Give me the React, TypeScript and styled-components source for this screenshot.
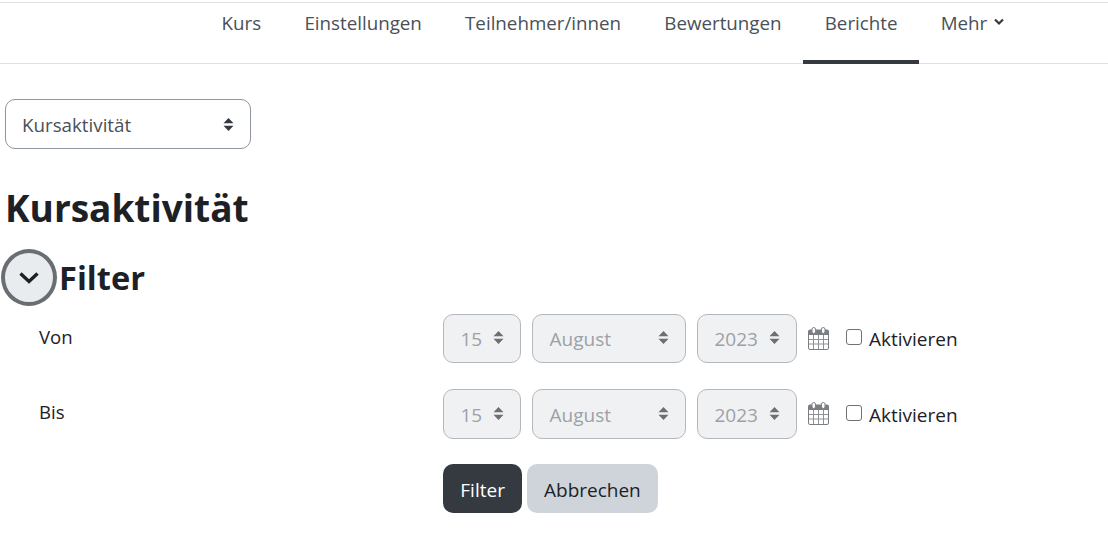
import React from "react";
import styled, { createGlobalStyle } from "styled-components";

const Global = createGlobalStyle`
  html, body { margin: 0; padding: 0; background: #fff; }
  body { font-family: "Open Sans", "Noto Sans", "Liberation Sans", sans-serif; color: #1d2125; }
`;
const Page = styled.div`
  width: 1108px;
  height: 535px;
  overflow: hidden;
  padding-top: 2px;
  box-sizing: border-box;
`;
const Nav = styled.nav`
  height: 62px;
  box-sizing: border-box;
  border-top: 1px solid #dee2e6;
  border-bottom: 1px solid #dee2e6;
  display: flex;
  padding-left: 200px;
`;
const Tab = styled.div<{ $active?: boolean }>`
  height: 61px;
  box-sizing: border-box;
  padding: 7px 21.6px 0;
  margin-bottom: -1px;
  font-size: 18.75px;
  line-height: 26px;
  color: #495057;
  white-space: nowrap;
  display: flex;
  align-items: flex-start;
  gap: 7px;
  border-bottom: 4px solid ${(p) => (p.$active ? "#343a40" : "transparent")};
`;
const Content = styled.main`
  padding: 35px 0 0 5px;
`;
const Sort = ({ color = "#495057", w = 11 }: { color?: string; w?: number }) => (
  <svg width={w} height="15" viewBox="0 0 11 15" aria-hidden="true">
    <path d="M5.5 1 L10.5 6.2 H0.5 Z M5.5 14 L10.5 8.8 H0.5 Z" fill={color} />
  </svg>
);
const JumpSelect = styled.div`
  width: 246px;
  height: 50px;
  box-sizing: border-box;
  border: 1px solid #8f959e;
  border-radius: 10px;
  padding: 0 16px;
  display: flex;
  align-items: center;
  justify-content: space-between;
  font-size: 18.75px;
  color: #495057;
`;
const Title = styled.h1`
  margin: 36px 0 0;
  font-size: 37px;
  line-height: 46px;
  font-weight: 700;
  color: #1d2125;
`;
const FilterHead = styled.div`
  display: flex;
  align-items: center;
  margin: 18px 0 0 -4px;
  gap: 2px;
`;
const Toggle = styled.button`
  width: 56px;
  height: 57px;
  padding: 0;
  box-sizing: border-box;
  border-radius: 50%;
  border: 4.5px solid #6a6e72;
  background: #e9ecef;
  display: flex;
  align-items: center;
  justify-content: center;
`;
const Subtitle = styled.h2`
  margin: 0;
  font-size: 32.6px;
  line-height: 44px;
  font-weight: 700;
  color: #1d2125;
`;
const Form = styled.div`
  display: grid;
  grid-template-columns: 404px auto;
  justify-content: start;
  margin: 7.6px 0 0 34px;
  row-gap: 25.5px;
`;
const Label = styled.div`
  font-size: 18.6px;
  line-height: 28px;
  padding-top: 9.6px;
  color: #1d2125;
`;
const Controls = styled.div`
  display: flex;
  align-items: center;
  height: 49.8px;
`;
const FakeSelect = styled.div<{ $w: number }>`
  width: ${(p) => p.$w}px;
  height: 100%;
  box-sizing: border-box;
  margin-right: 11px;
  border: 1px solid #b4b8bd;
  border-radius: 10px;
  background: #f0f1f3;
  padding: 2px 16px 0 16.5px;
  display: flex;
  align-items: center;
  justify-content: space-between;
  font-size: 19px;
  color: #9ba1a8;
`;
const SortSlot = styled.span`
  display: flex;
  margin-top: -3px;
`;
const Check = styled.span`
  width: 16px;
  height: 16px;
  box-sizing: border-box;
  margin: 0 7px 2px 0;
  border: 1.25px solid #6d7278;
  border-radius: 3px;
  background: #fff;
`;
const CheckText = styled.span`
  font-size: 19px;
  padding-top: 2px;
  color: #1d2125;
`;
const CalendarWrap = styled.span`
  display: flex;
  margin-right: 17px;
`;
const Actions = styled.div`
  grid-column: 2;
  display: flex;
  gap: 4.5px;
`;
const Button = styled.button<{ $primary?: boolean }>`
  height: 49px;
  padding: 2px 17.3px 0;
  border: 0;
  border-radius: 10px;
  font: inherit;
  font-size: 19px;
  background: ${(p) => (p.$primary ? "#343a40" : "#ced4da")};
  color: ${(p) => (p.$primary ? "#fff" : "#1d2125")};
`;
const Calendar = () => (
  <svg width="21" height="23" viewBox="0 0 21 23" aria-hidden="true">
    <rect x="0.5" y="3" width="20" height="19.5" rx="1.5" fill="#fff" stroke="#7a7d82" />
    <rect x="0.5" y="3" width="20" height="5" fill="#7a7d82" />
    <rect x="4" y="0.5" width="3.5" height="6" rx="1.7" fill="#fff" stroke="#7a7d82" />
    <rect x="13.5" y="0.5" width="3.5" height="6" rx="1.7" fill="#fff" stroke="#7a7d82" />
    <path d="M5.5 8v14M10.5 8v14M15.5 8v14M1 12.5h19M1 17h19" stroke="#8e9195" strokeWidth="1" fill="none" />
  </svg>
);
const DateRow = ({ label }: { label: string }) => (
  <>
    <Label>{label}</Label>
    <Controls>
      <FakeSelect $w={78}>15<SortSlot><Sort color="#6a7076" /></SortSlot></FakeSelect>
      <FakeSelect $w={154}>August<SortSlot><Sort color="#6a7076" /></SortSlot></FakeSelect>
      <FakeSelect $w={100}>2023<SortSlot><Sort color="#6a7076" /></SortSlot></FakeSelect>
      <CalendarWrap><Calendar /></CalendarWrap>
      <Check />
      <CheckText>Aktivieren</CheckText>
    </Controls>
  </>
);

export default function App() {
  return (
    <Page>
      <Global />
      <Nav>
        <Tab>Kurs</Tab>
        <Tab>Einstellungen</Tab>
        <Tab>Teilnehmer/innen</Tab>
        <Tab>Bewertungen</Tab>
        <Tab $active>Berichte</Tab>
        <Tab>
          Mehr
          <svg width="10" height="26" viewBox="0 0 10 26" aria-hidden="true">
            <path d="M1 9.5 L5 13.5 L9 9.5" fill="none" stroke="#343a40" strokeWidth="2.2" />
          </svg>
        </Tab>
      </Nav>
      <Content>
        <JumpSelect>Kursaktivität<Sort color="#343a40" /></JumpSelect>
        <Title>Kursaktivität</Title>
        <FilterHead>
          <Toggle aria-label="Filter einklappen">
            <svg width="22" height="14" viewBox="0 0 22 14" aria-hidden="true">
              <path d="M2.5 2.5 L11 10.5 L19.5 2.5" fill="none" stroke="#1d2125" strokeWidth="3.4" />
            </svg>
          </Toggle>
          <Subtitle>Filter</Subtitle>
        </FilterHead>
        <Form>
          <DateRow label="Von" />
          <DateRow label="Bis" />
          <Actions>
            <Button $primary>Filter</Button>
            <Button>Abbrechen</Button>
          </Actions>
        </Form>
      </Content>
    </Page>
  );
}
